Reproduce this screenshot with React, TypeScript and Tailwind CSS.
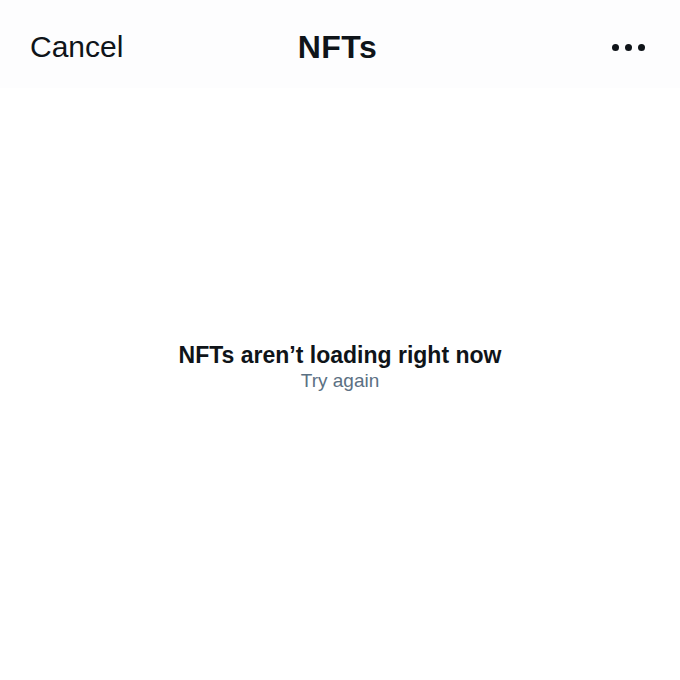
export default function App() {
  return (
    <div className="w-[680px] h-[680px] bg-white flex flex-col font-['Liberation_Sans',Arial,sans-serif] text-[#0f1419]">
      <header className="h-[88px] bg-[#fdfdfe] flex items-center justify-between pl-[30px] pr-[35px]">
        <span className="w-[120px] text-[30px] leading-none pt-[6px]">Cancel</span>
        <span className="text-[32px] font-bold leading-none pt-[6px] tracking-[0.5px]">NFTs</span>
        <span className="w-[120px] flex justify-end gap-[6px] pt-[7px]">
          <span className="w-[7px] h-[7px] rounded-full bg-[#0f1419]" />
          <span className="w-[7px] h-[7px] rounded-full bg-[#0f1419]" />
          <span className="w-[7px] h-[7px] rounded-full bg-[#0f1419]" />
        </span>
      </header>
      <main className="flex-1 flex flex-col items-center pt-[253px]">
        <p className="text-[23px] font-bold leading-[28px]">NFTs aren’t loading right now</p>
        <button className="text-[19px] leading-[24px] text-[#5b7083]">Try again</button>
      </main>
    </div>
  );
}
